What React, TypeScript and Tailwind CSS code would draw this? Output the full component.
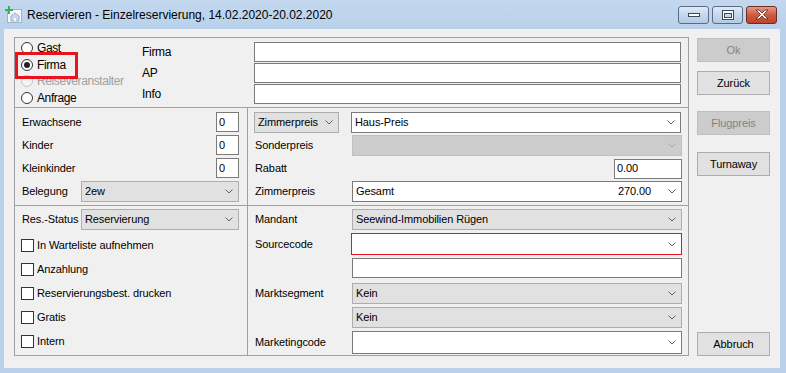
import React from "react";

const Chevron = ({ color = "#555" }: { color?: string }) => (
  <svg width="8" height="5" viewBox="0 0 8 5" className="shrink-0">
    <polyline points="0.5,0.5 4,4 7.5,0.5" fill="none" stroke={color} strokeWidth="1" />
  </svg>
);

type ComboProps = {
  text?: string;
  right?: string;
  variant?: "gray" | "white" | "disabled" | "red";
  className?: string;
};

const Combo = ({ text = "", right, variant = "white", className = "" }: ComboProps) => {
  const styles =
    variant === "gray"
      ? "bg-[#e1e1e1] border-[#adadad]"
      : variant === "disabled"
      ? "bg-[#cccccc] border-[#bfbfbf]"
      : variant === "red"
      ? "bg-white border-[#e81123]"
      : "bg-white border-[#7a7a7a]";
  return (
    <div className={`flex items-center border pl-[3px] pr-[5px] ${styles} ${className}`}>
      <span className="flex-1 truncate whitespace-nowrap">{text}</span>
      {right && <span className="mr-[17px]">{right}</span>}
      <Chevron color={variant === "disabled" ? "#a8a8a8" : "#606060"} />
    </div>
  );
};

const Input = ({ value = "", className = "" }: { value?: string; className?: string }) => (
  <div className={`flex items-center bg-white border border-[#7a7a7a] pl-[2px] ${className}`}>{value}</div>
);

const Radio = ({ label, checked, disabled }: { label: string; checked?: boolean; disabled?: boolean }) => (
  <div className="flex items-center h-[16.5px]">
    <div
      className={`w-[12px] h-[12px] rounded-full border flex items-center justify-center ${
        disabled ? "border-[#c4c4c4] bg-[#f4f4f4]" : "border-[#333] bg-white"
      }`}
    >
      {checked && <div className="w-[6px] h-[6px] rounded-full bg-[#222]" />}
    </div>
    <span className={`ml-[4px] text-[12px] tracking-[-0.4px] ${disabled ? "text-[#a0a0a0]" : "text-black"}`}>{label}</span>
  </div>
);

const Check = ({ label }: { label: string }) => (
  <div className="flex items-center h-[24px] -ml-[1px]">
    <div className="w-[13px] h-[13px] border border-[#333] bg-white" />
    <span className="ml-[3px]">{label}</span>
  </div>
);

const Button = ({ label, disabled, className = "" }: { label: string; disabled?: boolean; className?: string }) => (
  <div
    className={`w-[73px] h-[24px] flex items-center justify-center border ${
      disabled ? "bg-[#cccccc] border-[#bfbfbf] text-[#838383]" : "bg-[#e1e1e1] border-[#adadad] text-black"
    } ${className}`}
  >
    {label}
  </div>
);

const CaptionButton = ({ kind }: { kind: "min" | "max" | "close" }) => {
  const isClose = kind === "close";
  return (
    <div
      className={`w-[31px] h-[18px] rounded-[3px] border flex items-center justify-center ${
        isClose
          ? "border-[#6b2b22] bg-gradient-to-b from-[#e49a86] via-[#cf5a41] to-[#c0432b]"
          : "border-[#5b6b86] bg-gradient-to-b from-[#dfeaf7] via-[#c5d7ed] to-[#b3c9e4]"
      }`}
    >
      {kind === "min" && (
        <svg width="14" height="6" viewBox="0 0 14 6">
          <rect x="1.5" y="1.5" width="11" height="3" fill="#fff" stroke="#3d4a5e" />
        </svg>
      )}
      {kind === "max" && (
        <svg width="12" height="10" viewBox="0 0 12 10">
          <rect x="0.5" y="0.5" width="11" height="9" fill="#fff" stroke="#3d4a5e" />
          <rect x="2.5" y="3.5" width="7" height="4" fill="#c9d9ee" stroke="#3d4a5e" />
        </svg>
      )}
      {kind === "close" && (
        <svg width="14" height="11" viewBox="0 0 14 11">
          <path
            d="M1 1 L4 1 L7 4 L10 1 L13 1 L8.5 5.5 L13 10 L10 10 L7 7 L4 10 L1 10 L5.5 5.5 Z"
            fill="#fff"
            stroke="#5a2016"
            strokeWidth="0.8"
          />
        </svg>
      )}
    </div>
  );
};

const AppIcon = () => (
  <svg width="17" height="17" viewBox="0 0 17 17">
    <rect x="2.5" y="3.5" width="14" height="13" fill="#f4f8fc" stroke="#9fb3c8" />
    <path d="M6 15 L6 10 L10 7 L14 10 L14 15 Z" fill="#c9d8ea" stroke="#8aa2bd" strokeWidth="0.8" />
    <rect x="9" y="12" width="2" height="3" fill="#fff" />
    <path d="M3 0 L5 0 L5 3 L8 3 L8 5 L5 5 L5 8 L3 8 L3 5 L0 5 L0 3 L3 3 Z" fill="#3fae5a" />
  </svg>
);

export default function App() {
  return (
    <div className="w-[786px] h-[373px] bg-[#b9d1ea] flex flex-col font-['Liberation_Sans',Arial,sans-serif] text-[11px] tracking-[-0.1px] text-black overflow-hidden">
      {/* Title bar */}
      <div className="h-[29px] flex items-center bg-gradient-to-b from-[#c3d8ef] to-[#b9d1ea] shrink-0">
        <div className="ml-[5px]">
          <AppIcon />
        </div>
        <span className="ml-[5px] text-[12px] tracking-[0px] text-black">
          Reservieren - Einzelreservierung, 14.02.2020-20.02.2020
        </span>
        <div className="ml-auto mr-[9px] flex gap-[3px] items-center">
          <CaptionButton kind="min" />
          <CaptionButton kind="max" />
          <CaptionButton kind="close" />
        </div>
      </div>

      {/* Client area */}
      <div className="flex-1 ml-[4px] mr-[6px] mb-[5px] bg-[#f0f0f0] flex">
        {/* Main panel */}
        <div className="relative mt-[8px] ml-[10px] w-[675px] h-[319px] border border-[#a0a0a0] flex flex-col">
          {/* Top section */}
          <div className="h-[70px] border-b border-[#a0a0a0] flex">
            <div className="w-[127px] pl-[6px] pt-[2px] flex flex-col">
              <Radio label="Gast" />
              <Radio label="Firma" checked />
              <Radio label="Reiseveranstalter" disabled />
              <Radio label="Anfrage" />
            </div>
            <div className="w-[112px] pt-[4px] flex flex-col gap-[1px] text-[12px] tracking-[-0.3px]">
              <div className="h-[20px] flex items-center">Firma</div>
              <div className="h-[20px] flex items-center">AP</div>
              <div className="h-[20px] flex items-center">Info</div>
            </div>
            <div className="w-[427px] pt-[4px] flex flex-col gap-[1px]">
              <Input className="h-[20px]" />
              <Input className="h-[20px]" />
              <Input className="h-[20px]" />
            </div>
          </div>

          {/* Middle section */}
          <div className="h-[98px] border-b border-[#a0a0a0] flex">
            <div className="w-[233px] border-r border-[#a0a0a0] pl-[7px] pr-[8px] pt-[4px] flex flex-col gap-[3px]">
              <div className="h-[20px] flex items-center">
                <span className="flex-1">Erwachsene</span>
                <Input value="0" className="w-[23px] h-[20px]" />
              </div>
              <div className="h-[20px] flex items-center">
                <span className="flex-1">Kinder</span>
                <Input value="0" className="w-[23px] h-[20px]" />
              </div>
              <div className="h-[20px] flex items-center">
                <span className="flex-1">Kleinkinder</span>
                <Input value="0" className="w-[23px] h-[20px]" />
              </div>
              <div className="h-[21px] flex items-center">
                <span className="w-[59px] whitespace-nowrap">Belegung</span>
                <Combo variant="gray" text="2ew" className="flex-1 h-[21px]" />
              </div>
            </div>
            <div className="flex-1 pl-[6px] pr-[6px] pt-[4px] flex flex-col gap-[2px]">
              <div className="h-[21px] flex items-center">
                <Combo variant="gray" text="Zimmerpreis" className="w-[85px] h-[21px]" />
                <Combo variant="white" text="Haus-Preis" className="ml-[12px] w-[330px] h-[21px]" />
              </div>
              <div className="h-[21px] flex items-center">
                <span className="flex-1 pl-[1px]">Sonderpreis</span>
                <Combo variant="disabled" className="w-[330px] h-[21px]" />
              </div>
              <div className="h-[21px] flex items-center">
                <span className="flex-1 pl-[1px]">Rabatt</span>
                <Input value="0.00" className="w-[68px] h-[20px]" />
              </div>
              <div className="h-[21px] flex items-center">
                <span className="flex-1 pl-[1px]">Zimmerpreis</span>
                <Combo variant="white" text="Gesamt" right="270.00" className="w-[330px] h-[21px]" />
              </div>
            </div>
          </div>

          {/* Lower section */}
          <div className="flex-1 flex">
            <div className="w-[233px] border-r border-[#a0a0a0] pl-[7px] pr-[8px] pt-[3px] flex flex-col">
              <div className="h-[21px] flex items-center">
                <span className="w-[59px] whitespace-nowrap">Res.-Status</span>
                <Combo variant="gray" text="Reservierung" className="flex-1 h-[21px]" />
              </div>
              <div className="mt-[3px] flex flex-col">
                <Check label="In Warteliste aufnehmen" />
                <Check label="Anzahlung" />
                <Check label="Reservierungsbest. drucken" />
                <Check label="Gratis" />
                <Check label="Intern" />
              </div>
            </div>
            <div className="flex-1 pl-[6px] pr-[6px] pt-[3px] flex flex-col">
              <div className="h-[21px] flex items-center">
                <span className="flex-1 pl-[1px]">Mandant</span>
                <Combo variant="gray" text="Seewind-Immobilien Rügen" className="w-[330px] h-[21px]" />
              </div>
              <div className="mt-[3px] h-[22px] flex items-center">
                <span className="flex-1 pl-[1px]">Sourcecode</span>
                <Combo variant="red" className="w-[331px] h-[22px]" />
              </div>
              <div className="mt-[3px] h-[20px] flex items-center justify-end">
                <Input className="w-[330px] h-[20px]" />
              </div>
              <div className="mt-[5px] h-[21px] flex items-center">
                <span className="flex-1 pl-[1px]">Marktsegment</span>
                <Combo variant="gray" text="Kein" className="w-[330px] h-[21px]" />
              </div>
              <div className="mt-[3px] h-[21px] flex items-center justify-end">
                <Combo variant="gray" text="Kein" className="w-[330px] h-[21px]" />
              </div>
              <div className="mt-[3px] h-[23px] flex items-center">
                <span className="flex-1 pl-[1px]">Marketingcode</span>
                <Combo variant="white" className="w-[330px] h-[23px]" />
              </div>
            </div>
          </div>

          {/* Red highlight annotation */}
          <div className="absolute left-0 top-[14px] w-[63px] h-[27px] border-[3px] border-[#e8141c] pointer-events-none" />
        </div>

        {/* Buttons */}
        <div className="ml-[8px] flex flex-col">
          <Button label="Ok" disabled className="mt-[9px]" />
          <Button label="Zurück" className="mt-[9px]" />
          <Button label="Flugpreis" disabled className="mt-[16px]" />
          <Button label="Turnaway" className="mt-[17px]" />
          <Button label="Abbruch" className="mt-auto mb-[12px]" />
        </div>
      </div>
    </div>
  );
}
